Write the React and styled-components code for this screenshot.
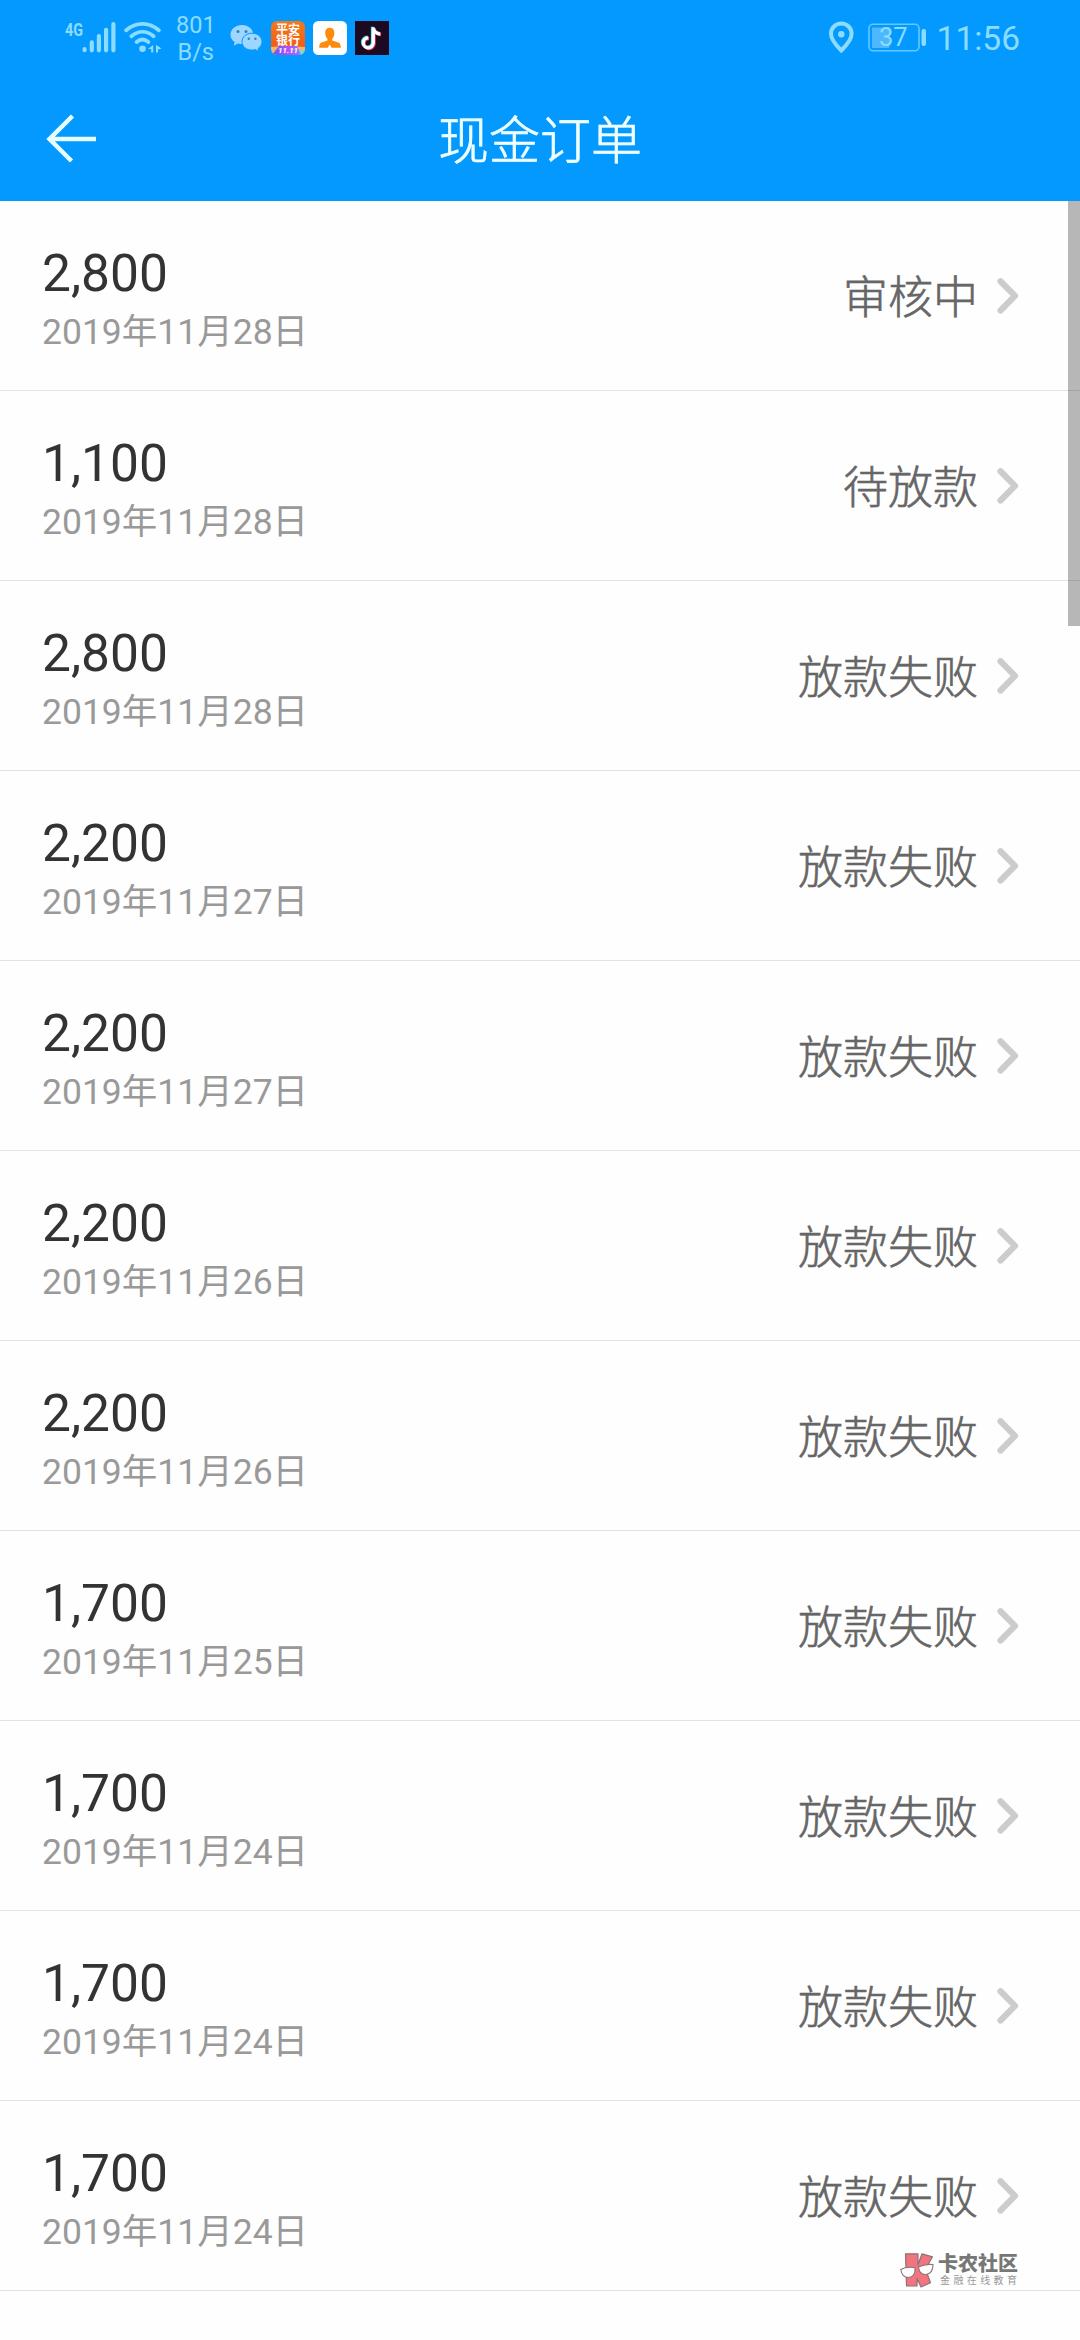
import React from 'react'
import styled, { createGlobalStyle } from 'styled-components'

const orders = [
    { amount: '2,800', date: '2019年11月28日', status: '审核中' },
    { amount: '1,100', date: '2019年11月28日', status: '待放款' },
    { amount: '2,800', date: '2019年11月28日', status: '放款失败' },
    { amount: '2,200', date: '2019年11月27日', status: '放款失败' },
    { amount: '2,200', date: '2019年11月27日', status: '放款失败' },
    { amount: '2,200', date: '2019年11月26日', status: '放款失败' },
    { amount: '2,200', date: '2019年11月26日', status: '放款失败' },
    { amount: '1,700', date: '2019年11月25日', status: '放款失败' },
    { amount: '1,700', date: '2019年11月24日', status: '放款失败' },
    { amount: '1,700', date: '2019年11月24日', status: '放款失败' },
    { amount: '1,700', date: '2019年11月24日', status: '放款失败' }
]

const tint = '#8cdcff'

const GlobalStyle = createGlobalStyle`
    * {
        box-sizing: border-box;
    }
    body {
        margin: 0;
        background: #fff;
        font-family: Roboto, 'Noto Sans CJK SC', sans-serif;
    }
    svg {
        display: block;
        flex: none;
    }
`

const Screen = styled.div`
    position: relative;
    width: 1080px;
    height: 2340px;
    overflow: hidden;
    background: #fefefe;
`

const Header = styled.header`
    height: 201px;
    background: #0399ff;
`

const StatusBar = styled.div`
    display: flex;
    justify-content: space-between;
    height: 80px;
    padding: 0 60px 0 64px;
    color: ${tint};
`

const StatusGroup = styled.div`
    display: flex;
    align-items: flex-start;
    padding-top: 20px;
`

const Speed = styled.div`
    width: 38px;
    margin: -8px 16px 0 13px;
    font-size: 23.5px;
    line-height: 27px;
    text-align: right;
`

const AppIcon = styled.svg`
    margin: 1px 8px 0 0;
`

const Clock = styled.div`
    margin-left: 9px;
    font-size: 33.5px;
    line-height: 37px;
`

const NavBar = styled.div`
    display: grid;
    grid-template-columns: 140px 1fr 140px;
    align-items: center;
    height: 117px;
`

const BackButton = styled.button`
    padding: 0 0 0 46px;
    border: 0;
    background: none;
`

const Title = styled.h1`
    margin: 7px 0 0;
    color: #efffff;
    font-size: 51px;
    font-weight: 300;
    line-height: 60px;
    text-align: center;
    -webkit-text-stroke: 0.7px;
`

const List = styled.ul`
    margin: 0;
    padding: 0;
    list-style: none;
`

const Row = styled.li`
    display: flex;
    align-items: center;
    justify-content: space-between;
    height: 190px;
    padding: 0 60px 0 42px;
    border-bottom: 1px solid #e2e2e2;
`

const Info = styled.div`
    padding-top: 8px;
`

const Amount = styled.div`
    color: #333;
    font-size: 51.5px;
    line-height: 60px;
`

const OrderDate = styled.div`
    margin-top: 4px;
    color: #999;
    font-size: 35.5px;
    line-height: 48px;
`

const Status = styled.div`
    display: flex;
    align-items: center;
    gap: 18px;
    color: #666;
    font-size: 45px;
    font-weight: 300;
    line-height: 60px;
`

const StatusText = styled.span`
    padding-top: 7px;
    -webkit-text-stroke: 0.6px;
`

const ScrollThumb = styled.div`
    position: absolute;
    top: 201px;
    right: 0;
    width: 12px;
    height: 425px;
    background: rgba(0, 0, 0, 0.28);
`

const Watermark = styled.div`
    position: absolute;
    top: 2253px;
    left: 900px;
    display: flex;
    gap: 4px;
`

const WatermarkName = styled.div`
    color: #777;
    font-size: 20px;
    font-weight: 900;
    line-height: 22px;
`

const WatermarkSlogan = styled.div`
    padding-left: 2px;
    color: #999;
    font-size: 10px;
    letter-spacing: 3.4px;
    line-height: 12px;
`

const Signal = () => (
    <svg width="53" height="36" viewBox="0 0 53 36">
        <text
            x="1"
            y="15.5"
            fill={tint}
            fontSize="18"
            fontWeight="700"
            textLength="18"
            lengthAdjust="spacingAndGlyphs"
        >
            4G
        </text>
        <g stroke={tint} strokeWidth="4.2" strokeLinecap="round">
            <path d="M20.6 29.2v1M27.8 22.3v8M34.9 16v14.3M42.1 9.8v20.5M49.4 4.2v26.1" />
        </g>
    </svg>
)

const WifiIcon = styled.svg`
    margin-left: 7px;
`

const Wifi = () => (
    <WifiIcon width="39" height="36" viewBox="0 0 39 36">
        <g
            fill="none"
            stroke={tint}
            strokeWidth="3.8"
            strokeLinecap="round"
        >
            <path d="M2.2 10.2C12 1.7 25 1.7 34.8 10.2" />
            <path d="M7.4 16.3C14.5 10.3 22.5 10.3 29.6 16.3" />
            <path d="M12.6 22C16.5 18.8 20.5 18.8 24.4 22" />
        </g>
        <circle cx="18.5" cy="28.7" r="3.3" fill={tint} />
        <path
            d="M24 29l5.2-4v7.5h-2V29zM37.5 28.5L32 24.7v7.800h2v-3z"
            fill={tint}
        />
    </WifiIcon>
)

const Wechat = () => (
    <svg width="41" height="36" viewBox="0 0 41 36">
        <path
            d="M12 5C5.4 5 .5 9.3.5 14.7c0 3 1.6 5.6 4.2 7.4l-1 3.6 4.3-2.2c1.3.4 2.6.6 4 .6 6.4 0 11.3-4.2 11.3-9.4S18.5 5 12 5z"
            fill="#9dd6ff"
        />
        <path
            d="M22 13.2c-5.7 0-10 3.7-10 8.5s4.3 8.4 10 8.4c1.2 0 2.4-.2 3.5-.5l3.4 1.900-.8-3c2.400-1.600 3.900-4 3.900-6.800 0-4.800-4.400-8.500-10-8.500z"
            fill="#9dd6ff"
            stroke="#0399ff"
            strokeWidth="1"
        />
        <g fill="#2a83c9">
            <circle cx="8" cy="11.6" r="1.5" />
            <circle cx="16" cy="11.6" r="1.5" />
            <circle cx="18.8" cy="18.8" r="1.2" />
            <circle cx="25.4" cy="18.8" r="1.2" />
        </g>
    </svg>
)

const BankApp = () => (
    <AppIcon width="34" height="34" viewBox="0 0 34 34">
        <defs>
            <clipPath id="bank">
                <rect width="34" height="34" rx="6" />
            </clipPath>
            <linearGradient id="promo">
                <stop offset="0" stopColor="#4b63ff" />
                <stop offset=".5" stopColor="#b94df0" />
                <stop offset="1" stopColor="#8d7bff" />
            </linearGradient>
            <linearGradient id="orange" x2="0" y2="1">
                <stop offset="0" stopColor="#f37a1c" />
                <stop offset="1" stopColor="#ee5414" />
            </linearGradient>
        </defs>
        <g clipPath="url(#bank)">
            <rect width="34" height="34" fill="url(#orange)" />
            <path d="M0 26l14-1 20 1v8H0z" fill="#f6b36a" />
            <path d="M28 28l6 2v4h-6z" fill="#7fd6d8" />
            <path d="M1 34l7-9h18l4 9z" fill="url(#promo)" />
            <g fill="#fff" fontWeight="700" textAnchor="middle">
                <text x="17" y="12.5" fontSize="12">平安</text>
                <text x="17" y="23.8" fontSize="12">银行</text>
                <text x="17" y="32.2" fontSize="8" fontStyle="italic">11.11</text>
            </g>
        </g>
    </AppIcon>
)

const PersonApp = () => (
    <AppIcon width="34" height="34" viewBox="0 0 34 34">
        <rect width="34" height="34" rx="5.5" fill="#fff" />
        <path
            d="M16.7 6.8c-3 0-4.6 2-4.5 5 0 2.7 1 4.8 2.2 6.2v1.5L8 21.7c-1.300.7-1.800 2.300-1.800 5.100h8.600l1.900-3.300 1.900 3.300h9.200c0-2.800-.5-4.400-1.800-5.100l-6.800-2.200V18c1.300-1.400 2.200-3.500 2.200-6.200 0-3-1.700-5-4.700-5z"
            fill="#ff8a0c"
        />
    </AppIcon>
)

const note = 'M18.3 6.5v15.3a5 5 0 1 1-5-5M18.3 7c.7 3.5 3.4 5.700 7 6'

const TiktokApp = () => (
    <AppIcon width="34" height="34" viewBox="0 0 34 34">
        <rect width="34" height="34" fill="#1c0a20" />
        <g fill="none" strokeWidth="3.3">
            <path d={note} stroke="#31e3e6" transform="translate(-.8 -.7)" />
            <path d={note} stroke="#f5315f" transform="translate(.8 .7)" />
            <path d={note} stroke="#fff" />
        </g>
    </AppIcon>
)

const Pin = () => (
    <svg width="27" height="36" viewBox="0 0 27 36">
        <path
            d="M13.3 3.5C7.4 3.5 3 8 3 13.8c0 5.7 4.5 11 10.3 16.7 5.8-5.7 10.3-11 10.3-16.7C23.600 8 19.200 3.500 13.300 3.500z"
            fill="none"
            stroke={tint}
            strokeWidth="4"
        />
        <circle cx="13.3" cy="14.2" r="3.2" fill={tint} />
    </svg>
)

const BatteryIcon = styled.svg`
    margin-left: 13px;
`

const Battery = () => (
    <BatteryIcon width="60" height="36" viewBox="0 0 60 36">
        <rect
            x="1"
            y="4.3"
            width="50"
            height="26.5"
            rx="4"
            fill="none"
            stroke="#62caff"
            strokeWidth="1.6"
        />
        <rect x="4" y="7.5" width="17.5" height="20.5" rx="1" fill="#4db8ff" />
        <rect x="53.5" y="9" width="4.5" height="17" rx="2" fill={tint} />
        <text x="11" y="26.3" fill={tint} fontSize="25.5">37</text>
    </BatteryIcon>
)

const BackArrow = () => (
    <svg width="52" height="50" viewBox="0 0 52 50">
        <path
            d="M26.5 2L3.5 25l22 22M3.5 25H50"
            fill="none"
            stroke="#e6ffff"
            strokeWidth="4.5"
        />
    </svg>
)

const Chevron = () => (
    <svg width="24" height="38" viewBox="0 0 24 38">
        <path
            d="M4.5 4.2L19 18.9 4.5 33.5"
            fill="none"
            stroke="#ccc"
            strokeWidth="6.2"
            strokeLinecap="round"
            strokeLinejoin="round"
        />
    </svg>
)

// K with a pair of glasses across it
const WatermarkLogo = () => (
    <svg width="34" height="36" viewBox="0 0 34 36">
        <path
            d="M5.500.8h12.500v11L22 .8l10.500 3-7 12.500 5 13.500-9.500 4.200-4-8.500v7.500H6.500z"
            fill="#f2747f"
            stroke="#8a7477"
            strokeWidth="1.2"
            strokeLinejoin="round"
        />
        <g fill="#fff" stroke="#8a7477" strokeWidth="1.1">
            <path d="M.8 16.500c4-2.300 9-2.800 14.200-1.800.5 6-2 9.500-6.500 9.800-4.500 0-7-3-7.700-8z" />
            <path d="M18.500 14c4.500-2.500 9.500-3 14.500-2.500 0 6-2.500 9.500-7 10-4.500.3-7-3-7.500-7.500z" />
        </g>
    </svg>
)

const App = () => (
    <>
        <GlobalStyle />
        <Screen>
            <Header>
                <StatusBar>
                    <StatusGroup>
                        <Signal />
                        <Wifi />
                        <Speed>
                            801
                            <br />
                            B/s
                        </Speed>
                        <Wechat />
                        <BankApp />
                        <PersonApp />
                        <TiktokApp />
                    </StatusGroup>
                    <StatusGroup>
                        <Pin />
                        <Battery />
                        <Clock>11:56</Clock>
                    </StatusGroup>
                </StatusBar>
                <NavBar>
                    <BackButton aria-label="返回">
                        <BackArrow />
                    </BackButton>
                    <Title>现金订单</Title>
                </NavBar>
            </Header>
            <List>
                {orders.map((order, i) => (
                    <Row key={i}>
                        <Info>
                            <Amount>{order.amount}</Amount>
                            <OrderDate>{order.date}</OrderDate>
                        </Info>
                        <Status>
                            <StatusText>{order.status}</StatusText>
                            <Chevron />
                        </Status>
                    </Row>
                ))}
            </List>
            <ScrollThumb />
            <Watermark>
                <WatermarkLogo />
                <div>
                    <WatermarkName>卡农社区</WatermarkName>
                    <WatermarkSlogan>金融在线教育</WatermarkSlogan>
                </div>
            </Watermark>
        </Screen>
    </>
)

export default App
